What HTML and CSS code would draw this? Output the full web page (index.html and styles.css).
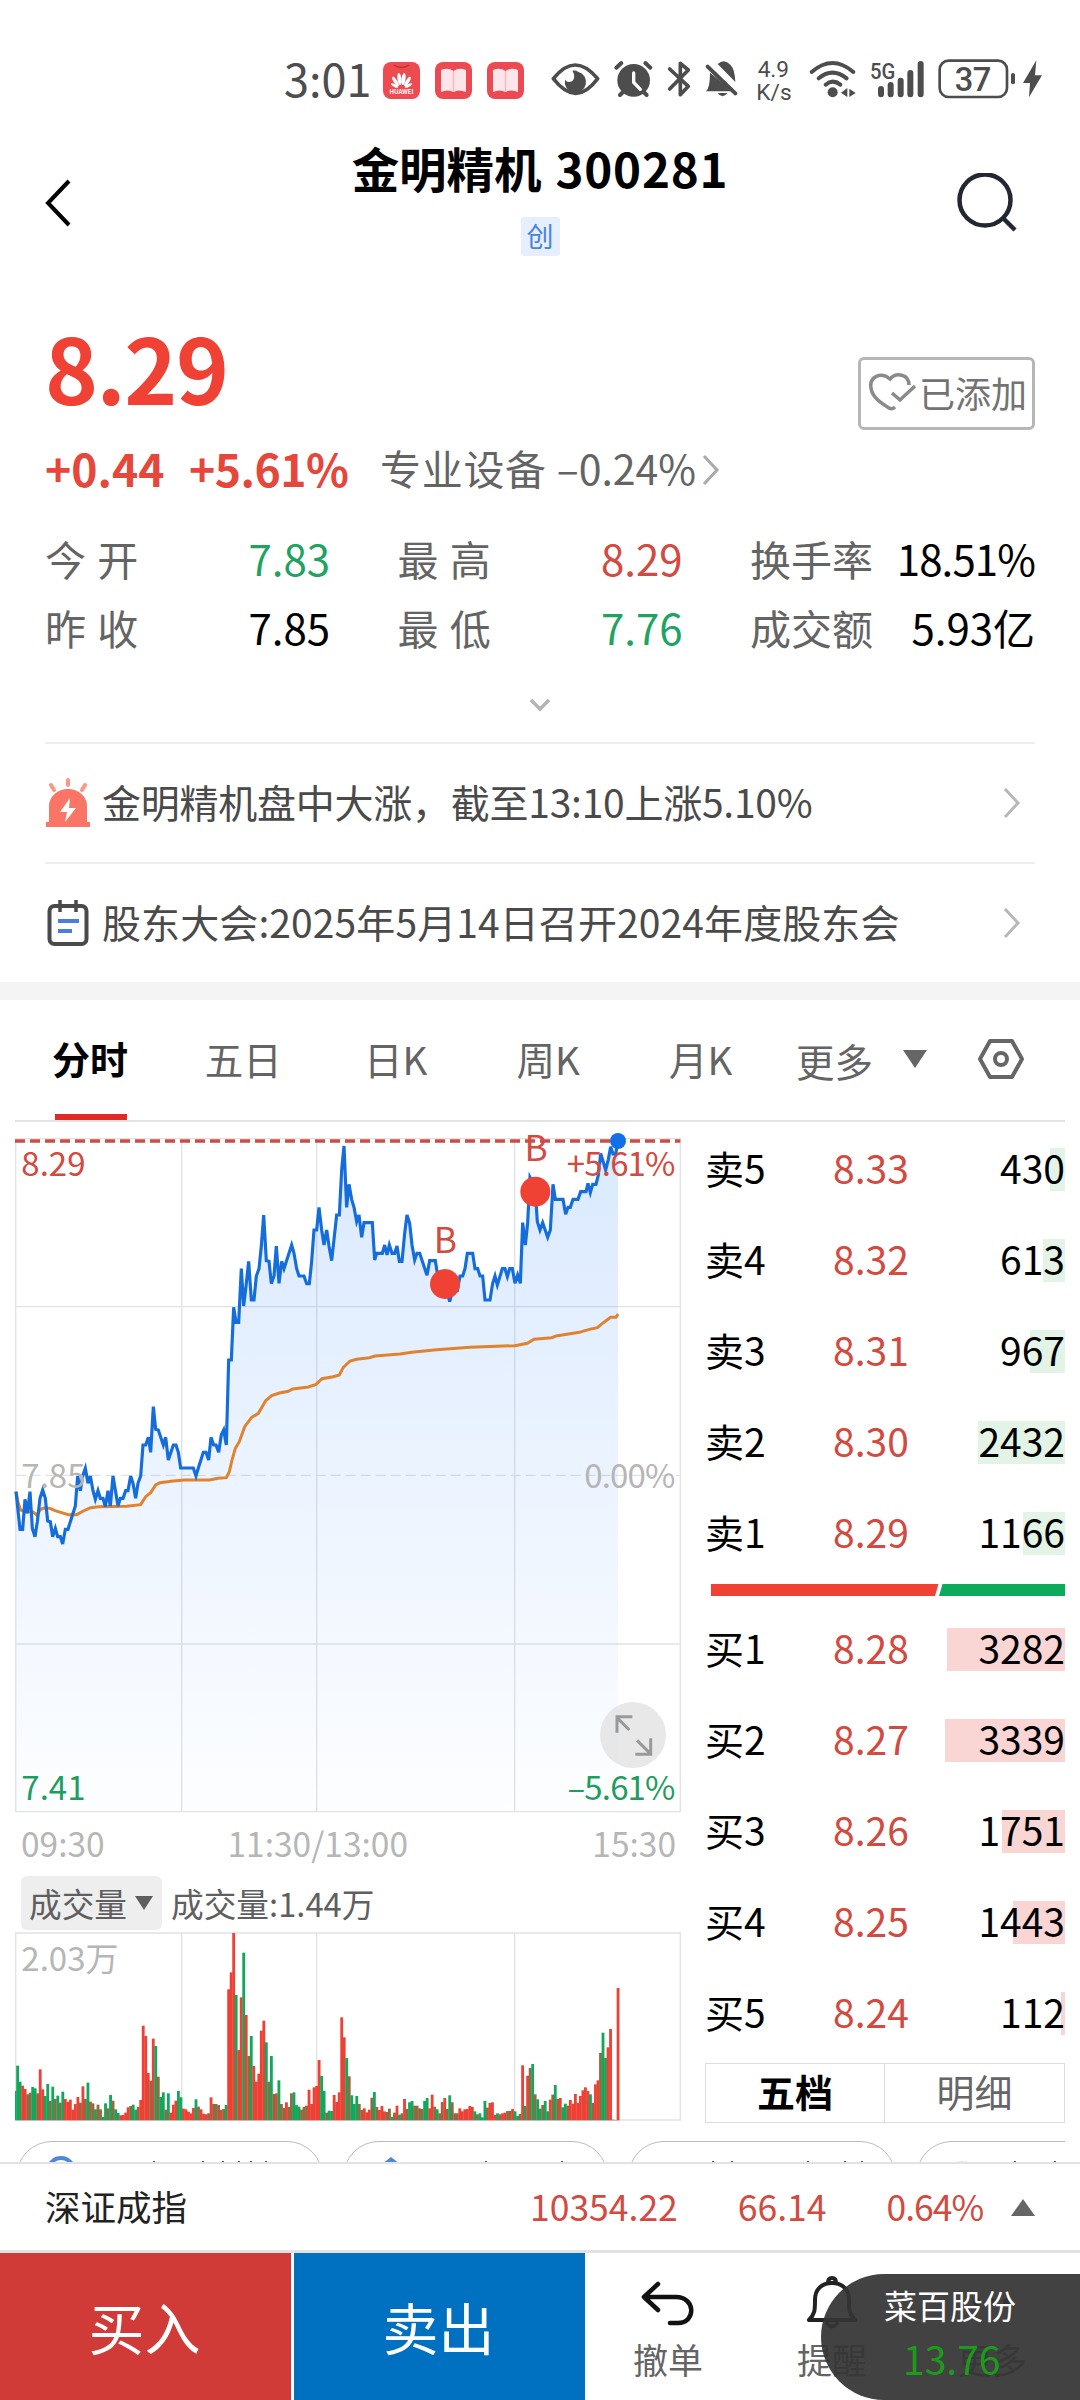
FILE: index.html
```
<!DOCTYPE html>
<html lang="zh-CN">
<head>
    <meta charset="UTF-8">
    <meta name="viewport" content="width=device-width, initial-scale=1.0">
    <title>金明精机 300281</title>
    <link rel="stylesheet" href="styles.css">
</head>
<body>
    <!-- Status Bar -->
    <div class="status-bar">
        <span class="time">3:01</span>
        <div class="app-badges">
            <svg width="37" height="37" viewBox="0 0 37 37">
                <rect width="37" height="37" rx="8" fill="#ee4b50"/>
                <path d="M11 3q7.500 5 15 0" fill="none" stroke="#b93338" stroke-width="1.500"/>
                <g fill="#fff">
                    <ellipse cx="16.500" cy="17" rx="2" ry="6" transform="rotate(-8 16.500 17)"/>
                    <ellipse cx="20.500" cy="17" rx="2" ry="6" transform="rotate(8 20.500 17)"/>
                    <ellipse cx="12.500" cy="19.500" rx="1.800" ry="5.500" transform="rotate(-32 12.500 19.500)"/>
                    <ellipse cx="24.500" cy="19.500" rx="1.800" ry="5.500" transform="rotate(32 24.500 19.500)"/>
                    <ellipse cx="11.500" cy="23.500" rx="1.300" ry="4" transform="rotate(-62 11.500 23.500)"/>
                    <ellipse cx="25.500" cy="23.500" rx="1.300" ry="4" transform="rotate(62 25.500 23.500)"/>
                </g>
                <text x="18.500" y="32" class="brand" text-anchor="middle">HUAWEI</text>
            </svg>
            <svg width="37" height="37" viewBox="0 0 37 37">
                <rect width="37" height="37" rx="8" fill="#ec4a52"/>
                <path d="M6 8q7-3 12.500 1q5.500-4 12.500-1v22q-7-3-12.500 0q-5.500-3-12.500 0z" fill="#fde6ea"/>
                <path d="M18.500 9v21" stroke="#f5b9c3" stroke-width="1.500"/>
            </svg>
            <svg width="37" height="37" viewBox="0 0 37 37">
                <rect width="37" height="37" rx="8" fill="#ec4a52"/>
                <path d="M6 8q7-3 12.500 1q5.500-4 12.500-1v22q-7-3-12.500 0q-5.500-3-12.500 0z" fill="#fde6ea"/>
                <path d="M18.500 9v21" stroke="#f5b9c3" stroke-width="1.500"/>
            </svg>
        </div>
        <svg class="status-icons" width="520" height="70" viewBox="0 0 1560 210">
            <g fill="none" stroke="#4d4d4d" stroke-linecap="round" stroke-linejoin="round">
                <path d="M40 101q65-82 133 0q-65 88-133 0z" stroke-width="11"/>
                <path d="M229 68l15-14M331 68l-15-14M240 150l12-12M320 150l-12-12" stroke-width="12"/>
                <path d="M389 72l56 52-24 25V55l24 20-56 57" stroke-width="11"/>
                <path d="M503 65l83 80" stroke-width="12"/>
                <path d="M815 81q62-54 125 0M836 100q41-34 84 0M857 119q21-18 44 0" stroke-width="12"/>
                <path d="M1023 132v16M1052 120v28M1082 107v41M1111 84v64M1142 57v91" stroke-width="18"/>
                <rect x="1199" y="47" width="202" height="109" rx="27" stroke-width="8"/>
                <path d="M1419 90v22" stroke-width="12"/>
            </g>
            <g fill="#4d4d4d">
                <path d="M97 77q10-2 17 3a32 32 0 1 1-39 24q5 8 14 7c16-3 17-20 8-34z"/>
                <circle cx="281" cy="106" r="49"/>
                <path d="M510 83l68 56h-80q12-11 12-56zM533 57q20-18 38 2q14 14 15 52zM533 144h29q-14 20-29 0z"/>
                <circle cx="878" cy="142" r="15"/>
                <path d="M903 143l19-14v27zM928 131l19 13-19 12z"/>
                <path d="M1489 46l-40 68h21l-3 43 39-66h-21z"/>
            </g>
            <path d="M281 84v28l20 21" fill="none" stroke="#fff" stroke-width="10" stroke-linecap="round"/>
            <text x="700" y="97" font-size="68" textLength="94" text-anchor="middle">4.9</text>
            <text x="702" y="164" font-size="68" textLength="106" text-anchor="middle">K/s</text>
            <text x="990" y="101" font-size="68" textLength="76" lengthAdjust="spacingAndGlyphs" class="medium">5G</text>
            <text x="1299" y="138" font-size="98" textLength="110" text-anchor="middle" class="medium">37</text>
        </svg>
    </div>

    <!-- Title -->
    <div class="header">
        <svg width="26" height="48" viewBox="0 0 26 48"><path d="M24 2L3 24l21 22" fill="none" stroke="#000" stroke-width="4"/></svg>
        <div class="title-box">
            <h1>金明精机 <span>300281</span></h1>
            <span class="board">创</span>
        </div>
        <svg width="60" height="60" viewBox="0 0 60 60" fill="none" stroke="#222731" stroke-width="4.500"><circle cx="28" cy="27" r="25.500"/><path d="M46 45l12 12"/></svg>
    </div>

    <!-- Quote -->
    <div class="quote">
        <div class="price-row">
            <span class="price">8.29</span>
            <div class="added">
                <svg width="50" height="40" viewBox="0 0 50 40" fill="none" stroke="#8a8a8a" stroke-width="3.500"><path d="M41 13C41 2 28 0 22 7C13-1 1 5 3 16c1 9 10 15 18 20q3 2 6-1"/><path d="M24 21l8 7 15-14"/></svg>
                已添加
            </div>
        </div>
        <div class="change-row">
            <b>+0.44</b>
            <b class="pct">+5.61%</b>
            <span class="sector">专业设备 <i>–0.24%</i></span>
            <svg width="18" height="30" viewBox="0 0 18 30"><path d="M2 1l13 14L2 29" fill="none" stroke="#aaa" stroke-width="3"/></svg>
        </div>
        <div class="stats">
            <div class="stat"><label>今 开</label><span class="green">7.83</span></div>
            <div class="stat"><label>最 高</label><span class="red">8.29</span></div>
            <div class="stat"><label>换手率</label><span class="tight">18.51%</span></div>
            <div class="stat"><label>昨 收</label><span>7.85</span></div>
            <div class="stat"><label>最 低</label><span class="green">7.76</span></div>
            <div class="stat"><label>成交额</label><span>5.93亿</span></div>
        </div>
        <div class="expand">
            <svg width="22" height="14" viewBox="0 0 22 14"><path d="M2 2l9 9 9-9" fill="none" stroke="#b4b4b4" stroke-width="3.500"/></svg>
        </div>
        <div class="notice">
            <svg width="46" height="50" viewBox="0 0 46 50">
                <path d="M23 2v5M6 7l3 5M40 7l-3 5" stroke="#ff9584" stroke-width="4" stroke-linecap="round"/>
                <path d="M4 44V28a19 17 0 0 1 38 0v16h3v5H1v-5z" fill="#fb7566"/>
                <path d="M25 20L15 34h7l-2 10 11-14h-7z" fill="#fff"/>
            </svg>
            <span class="news">金明精机盘中大涨，截至13:10上涨5.10%</span>
            <svg width="18" height="32" viewBox="0 0 18 32"><path d="M2 2l13 14L2 30" fill="none" stroke="#b8b8b8" stroke-width="3"/></svg>
        </div>
        <div class="notice">
            <svg width="46" height="50" viewBox="0 0 46 50" fill="none">
                <rect x="4.500" y="8" width="37" height="38" rx="5" stroke="#4a4a4a" stroke-width="4"/>
                <path d="M15 2v12M31 2v12" stroke="#4a4a4a" stroke-width="3.500"/>
                <path d="M13 23h21M13 33h14" stroke="#4b7de0" stroke-width="4"/>
            </svg>
            <span>股东大会:2025年5月14日召开2024年度股东会</span>
            <svg width="18" height="32" viewBox="0 0 18 32"><path d="M2 2l13 14L2 30" fill="none" stroke="#b8b8b8" stroke-width="3"/></svg>
        </div>
    </div>
    <div class="band"></div>

    <!-- Period Tabs -->
    <div class="tabs">
        <span class="tab active">分时</span>
        <span class="tab">五日</span>
        <span class="tab">日K</span>
        <span class="tab">周K</span>
        <span class="tab">月K</span>
        <span class="tab more">更多<svg width="24" height="18" viewBox="0 0 24 18"><path d="M0 0h24L12 18z" fill="#666"/></svg></span>
        <svg class="gear" width="46" height="42" viewBox="0 0 46 42" fill="none" stroke="#666"><path d="M12 3h22l10 18-10 18H12L2 21z" stroke-width="4" stroke-linejoin="round"/><circle cx="23" cy="21" r="6" stroke-width="4"/></svg>
    </div>

    <div class="main">
        <div class="charts">
            <!-- Price Chart -->
            <svg class="price-chart" width="667" height="675" viewBox="45 54 2001 2025">
                <defs>
                    <linearGradient id="area" x1="0" y1="0" x2="0" y2="1">
                        <stop offset="0" stop-color="#1a78ff" stop-opacity=".16"/>
                        <stop offset="1" stop-color="#1a78ff" stop-opacity=".01"/>
                    </linearGradient>
                </defs>
                <path class="grid" d="M47 56H2041V2075H47zM47 560H2041M47 1572H2041M545 56V2075M950 56V2075M1544 56V2075"/>
                <path d="M47 1066H2041" class="grid" stroke-dasharray="30 15"/>
                <path id="fill" fill="url(#area)"/>
                <polyline class="avg" points="48,1115 55,1150 62,1170 75,1175 98,1175 110,1185 122,1168 135,1163 150,1165 165,1172 205,1184 230,1184 250,1173 272,1163 295,1160 380,1159 422,1154 437,1130 452,1118 467,1095 480,1088 520,1083 555,1080 628,1080 655,1075 679,1073 688,1055 696,1020 706,985 718,965 734,920 755,892 775,880 797,842 815,827 838,819 865,814 878,807 925,801 948,793 966,776 1000,770 1018,765 1030,742 1050,723 1070,718 1108,713 1125,708 1200,702 1235,697 1310,689 1410,682 1545,677 1582,670 1602,658 1655,653 1668,648 1738,637 1768,628 1792,623 1810,608 1832,592 1848,592 1854,582"/>
                <polyline id="line" class="line" points="48,1115 60,1228 68,1228 75,1138 82,1180 90,1115 97,1225 105,1250 112,1205 120,1135 128,1110 136,1135 143,1203 151,1205 158,1250 166,1225 173,1250 181,1250 188,1272 196,1228 204,1228 211,1205 226,1158 233,1068 241,1112 248,1068 256,1045 264,1090 271,1068 279,1112 286,1138 294,1112 301,1135 309,1135 316,1160 324,1112 331,1158 339,1068 354,1158 361,1135 369,1135 377,1112 384,1112 392,1068 399,1090 407,1135 414,1090 422,1068 429,975 437,975 445,952 452,997 460,860 467,928 475,930 490,975 497,952 505,1020 520,975 528,975 535,997 542,1044 580,1044 588,1068 595,1044 610,997 618,997 626,1020 633,952 641,975 648,975 656,997 664,944 671,930 679,975 686,720 694,720 701,562 708,607 716,607 724,446 731,558 739,490 746,424 754,540 762,540 769,468 777,446 784,378 791,285 799,422 807,424 814,491 822,468 829,378 837,490 845,424 852,446 875,375 882,400 890,446 897,468 912,468 920,491 928,491 935,424 942,330 950,330 957,262 965,330 972,375 980,330 987,378 995,422 1010,285 1018,285 1025,150 1032,78 1040,262 1047,193 1055,238 1062,262 1070,305 1077,285 1085,352 1092,308 1117,308 1124,420 1130,400 1147,400 1154,375 1161,405 1168,375 1176,400 1184,400 1191,378 1198,424 1206,424 1214,340 1221,285 1229,310 1236,375 1244,420 1251,400 1259,400 1281,466 1289,422 1306,422 1312,460 1320,490 1342,515 1349,545 1357,515 1372,512 1380,468 1388,468 1395,446 1402,400 1418,400 1425,446 1433,446 1440,468 1448,468 1455,540 1470,540 1478,490 1485,468 1492,495 1507,446 1515,446 1522,470 1529,446 1537,446 1545,490 1553,465 1561,490 1568,308 1576,375 1583,308 1590,172 1605,200 1612,305 1620,330 1628,308 1643,352 1651,330 1659,193 1666,238 1689,238 1697,283 1704,262 1711,262 1719,238 1734,238 1742,215 1758,215 1764,190 1771,218 1778,193 1788,193 1795,165 1802,100 1817,150 1825,118 1832,80 1839,102 1847,102 1854,62"/>
                <path d="M45 63H2041" stroke="#cd4b41" stroke-width="10" stroke-dasharray="30 15"/>
                <text x="64" y="1104" class="axis">7.85</text>
                <text x="2024" y="1104" class="axis end">0.00%</text>
                <text x="64" y="168" class="axis up">8.29</text>
                <text x="2024" y="168" class="axis up end">+5.61%</text>
                <text x="64" y="2041" class="axis down">7.41</text>
                <text x="2024" y="2041" class="axis down end">–5.61%</text>
                <circle cx="1854" cy="63" r="24" fill="#1070e8"/>
                <circle cx="1335" cy="492" r="45" fill="#ef4234"/>
                <circle cx="1606" cy="215" r="45" fill="#ef4234"/>
                <text x="1336" y="399" class="mark">B</text>
                <text x="1608" y="123" class="mark">B</text>
                <circle cx="1899" cy="1845" r="99" fill="#dedede" fill-opacity=".7"/>
                <path d="M1888 1830l-37-37M1851 1838v-48h46M1911 1861l37 37M1906 1903h46v-48" fill="none" stroke="#999" stroke-width="9"/>
            </svg>
            <div class="time-axis"><span>09:30</span><span class="noon">11:30/13:00</span><span>15:30</span></div>
            <div class="indicator">
                <span class="select">成交量<svg width="18" height="14" viewBox="0 0 18 14"><path d="M0 0h18L9 14z" fill="#5f5f5f"/></svg></span>
                成交量:1.44万
            </div>
            <!-- Volume Chart -->
            <svg class="volume-chart" width="667" height="190" viewBox="45 96 2001 570">
                <path class="grid" d="M47 99H2041V660H47zM545 99V660M950 99V660M1544 99V660"/>
                <text x="64" y="213" class="axis">2.03万</text>
                <g id="bars"></g>
            </svg>
        </div>

        <!-- Order Book -->
        <div class="book">
            <div id="asks"></div>
            <svg class="ratio" width="354" height="12" viewBox="0 0 354 12"><path d="M0 0h227.500l-3.500 12H0z" fill="#ef4234"/><path d="M231.500 0H354v12H228z" fill="#0cab5c"/></svg>
            <div id="bids"></div>
            <div class="book-tabs"><span class="on">五档</span><span>明细</span></div>
        </div>
    </div>

    <!-- Shortcut chips, cut off by the index bar -->
    <div class="chips">
        <div class="chip c1"><svg width="250" height="24" viewBox="0 0 250 24"><circle cx="44" cy="29" r="13" fill="none" stroke="#4f86d6" stroke-width="4"/><path d="M137 19v4M175 20v3M186 19v4M206 19v4M222 19v4M234 19v4M249 19v4" stroke="#555" stroke-width="2"/></svg></div>
        <div class="chip c2"><svg width="230" height="24" viewBox="0 0 230 24"><path d="M33 26l14-11 14 11" fill="#4f86d6"/><path d="M142 19v4M176 20v3M218 19v4" stroke="#555" stroke-width="2"/></svg></div>
        <div class="chip c3"><svg width="240" height="24" viewBox="0 0 240 24"><path d="M84 19v4M103 19v4M145 20v3M179 19v4M216 19v4M233 19v4" stroke="#555" stroke-width="2"/></svg></div>
        <div class="chip c4"><svg width="150" height="24" viewBox="0 0 150 24"><path d="M40 21h10" stroke="#ddd" stroke-width="3"/><path d="M98 19v4M138 19v4" stroke="#555" stroke-width="2"/></svg></div>
    </div>

    <div class="index-bar">
        <span class="name">深证成指</span>
        <span class="red">10354.22</span>
        <span class="red diff">66.14</span>
        <span class="red rate">0.64%</span>
        <svg width="24" height="17" viewBox="0 0 24 17"><path d="M12 0l12 17H0z" fill="#666"/></svg>
    </div>

    <!-- Bottom Actions -->
    <div class="footer">
        <div class="trade buy">买入</div>
        <div class="trade sell">卖出</div>
        <div class="action">
            <svg width="54" height="56" viewBox="0 0 54 56" fill="none" stroke="#111" stroke-width="4.500" stroke-linecap="round" stroke-linejoin="round"><path d="M17 9L3 22l14 13M4 22h31c20 0 20 26 2 26h-8"/></svg>
            撤单
        </div>
        <div class="action alert">
            <svg width="54" height="56" viewBox="0 0 54 56" fill="none" stroke="#222" stroke-width="4" stroke-linejoin="round"><path d="M4 45h46c-6-6-6-10-6-20C44 14 37 8 27 8S10 14 10 25c0 10 0 14-6 20zM23 8q0-5 4-5t4 5M21 47q6 9 12 0"/></svg>
            提醒
        </div>
        <div class="action">
            <svg width="54" height="56" viewBox="0 0 54 56" fill="#222"><circle cx="12" cy="27" r="4"/><circle cx="27" cy="27" r="4"/><circle cx="42" cy="27" r="4"/></svg>
            更多
        </div>
        <div class="floating">
            <span>菜百股份</span>
            <span class="value">13.76</span>
        </div>
    </div>

    <script>
        // Close the price line down to the bottom of the chart
        const points = document.getElementById("line").getAttribute("points");
        document.getElementById("fill").setAttribute("d", "M48 2075L" + points + " 1854,2075z");

        // One entry per minute: top of the bar and its colour (r up, g down, m mixed)
        const volumes = "573g 497g 545g 557r 567r 583m 578m 561g 565g 580m 508r 568r 588g 552g 603m 560g 597m 587g 608m 575g 597r 606r 599r 629r 612r 591r 608m 559r 597m 548g 605m 610m 628g 614m 628m 651g 610g 625m 585g 602m 628g 639g 646r 645r 638r 622r 618m 614g 629g 621m 600r " +
            "377r 408r 519r 542m 416r 438g 530m 591g 577g 629m 580g 638r 614r 602r 573g 592g 626r 628r 635r 640r 624r 598g 620m 628r 641r 643r 640m 592r 612m 612m 615m 630r 627m 615g 268r 217r 99r 285g 450r 292r 158g 345r 468m 408g 498r 545r 521r 392r 362r 427g 545m 468g 582m 580r 541g 612m 624m 607r 621m 580m 577g 615g 620g 629m 621m 617m 569r 612r 562r 558r 480r 528g 573g 638m 632g 633g 585r 606r 577r 352r 412r 474g 529m " +
            "586g 612g 588g 612m 630m 625r 637r 629r 593m 576g 621m 630r 618r 634r 636m 626m 651g 638m 617r 644g 640m 597r 627m 607g 603g 617m 617m 625m 627m 603g 594g 625r 584r 620m 628g 640m 606m 594r 627m 586g 607m 640m 640m 625r 634r 628r 627r 618r 621r 634g 643m 640g 652g 603g 623m 609r 607r 645r 640g 643m 640r 638r 633m 633m 627r 634g 648g 642m 496r 618g 527r 504m 492g 583m 598g 626g 615m 603g 634g 599r 584m 555g 597m 594r 622g 611g 617m 600r 611r 582r 609r 588r 571r 562r 573r 583g 609m 553r 541r 459m 398g 474g 442r 387r 659g 660r 264r";
        const colors = { r: "#ed4135", g: "#12a85b", m: "#94693f" };
        let bars = "";
        volumes.split(" ").forEach(function(item, i) {
            const top = parseInt(item);
            const x = 41 + i * 7.5375;
            const left = Math.max(x, 45);
            bars += `<rect x="${left}" y="${top}" width="${x + 8.5 - left}" height="${661 - top}" fill="${colors[item.slice(-1)]}"/>`;
        });
        document.getElementById("bars").innerHTML = bars;

        // Order book rows, bar width is relative to the largest order
        function renderRows(id, rows) {
            document.getElementById(id).innerHTML = rows.map(function(row) {
                const width = Math.round(row[2] * 120 / 3339);
                return `<div class="order ${id}"><span>${row[0]}</span><span class="red">${row[1]}</span>
                    <span class="amount"><i style="width:${width}px"></i>${row[2]}</span></div>`;
            }).join("");
        }
        renderRows("asks", [["卖5", "8.33", 430], ["卖4", "8.32", 613], ["卖3", "8.31", 967], ["卖2", "8.30", 2432], ["卖1", "8.29", 1166]]);
        renderRows("bids", [["买1", "8.28", 3282], ["买2", "8.27", 3339], ["买3", "8.26", 1751], ["买4", "8.25", 1443], ["买5", "8.24", 112]]);
    </script>
</body>
</html>
```
FILE: styles.css
```
/* General Reset and Basic Styles */
* {
    margin: 0;
    padding: 0;
    box-sizing: border-box;
}

body {
    width: 1080px;
    height: 2400px;
    overflow: hidden;
    background-color: #fff;
    color: #000;
    font-family: "Noto Sans CJK SC", sans-serif;
}

svg {
    display: block;
    flex-shrink: 0;
}

i {
    font-style: normal;
}

.red {
    color: #d24a40;
}

.green {
    color: #1ea362;
}

/* Status Bar */
.status-bar {
    display: flex;
    align-items: center;
    height: 120px;
    padding: 40px 0 0 284px;
    color: #4d4d4d;
}

.time {
    width: 99px;
    margin-top: -4px;
    font-size: 45px;
    line-height: 60px;
}

.app-badges {
    display: flex;
    gap: 15px;
    width: 157px;
}

.brand {
    font-size: 6px;
    font-weight: bold;
    fill: #fff;
}

.status-icons text {
    font-family: Roboto, sans-serif;
    fill: #4d4d4d;
}

.status-icons .medium {
    font-weight: 500;
}

/* Title */
.header {
    display: flex;
    align-items: center;
    justify-content: space-between;
    height: 166px;
    padding: 0 63px 0 45px;
}

.title-box {
    display: flex;
    flex-direction: column;
    align-items: center;
    align-self: flex-start;
    padding: 18px 0 0 52px;
}

.title-box h1 {
    font-size: 47.5px;
    line-height: 60px;
}

.title-box h1 span {
    letter-spacing: 0.8px;
    margin-left: 3px;
}

.board {
    width: 39px;
    height: 39px;
    margin-top: 19px;
    border-radius: 3px;
    background-color: #e6effd;
    color: #4a83dc;
    font-size: 27px;
    line-height: 37px;
    text-align: center;
}

/* Quote */
.quote {
    padding: 28px 45px 0;
}

.price-row {
    display: flex;
    justify-content: space-between;
    height: 115px;
}

.price {
    margin-top: 2px;
    color: #ef4234;
    font-size: 90px;
    font-weight: bold;
    letter-spacing: -1.5px;
    line-height: 100px;
}

.added {
    display: flex;
    align-items: center;
    gap: 1px;
    width: 177px;
    height: 73px;
    margin-top: 43px;
    padding: 0 0 3px 7px;
    border: 3px solid #b6b6b6;
    border-radius: 6px;
    color: #737373;
    font-size: 36px;
    white-space: nowrap;
}

.change-row {
    display: flex;
    align-items: center;
    height: 60px;
    margin-top: 8px;
    color: #646464;
    font-size: 41px;
}

.change-row b {
    width: 144px;
    color: #e5473b;
    font-size: 44.5px;
}

.change-row b.pct {
    width: 191px;
    letter-spacing: -0.5px;
}

.sector {
    width: 322px;
    letter-spacing: 0.7px;
    white-space: nowrap;
}

.sector i {
    letter-spacing: 0;
}

.change-row svg {
    margin-top: 6px;
}

.stats {
    display: grid;
    grid-template-columns: 285px 285px 285px;
    column-gap: 67.5px;
    margin-top: 26px;
}

.stat {
    display: flex;
    justify-content: space-between;
    align-items: center;
    height: 69px;
    font-size: 42px;
    white-space: nowrap;
}

.stat label {
    color: #646464;
    font-size: 41px;
    word-spacing: 2px;
}

.stat .tight {
    letter-spacing: -0.9px;
}

.expand {
    display: flex;
    justify-content: center;
    height: 81px;
    padding-top: 37px;
}

.notice {
    display: flex;
    align-items: center;
    height: 120px;
    border-top: 2px solid #efefef;
    color: #4a4a4a;
    font-size: 39px;
}

.notice span {
    flex: 1;
    margin: -4px 0 0 11px;
    letter-spacing: 0.1px;
}

.notice .news {
    letter-spacing: -0.25px;
}

.notice svg:last-child {
    margin-right: 14px;
}

.band {
    height: 18px;
    background-color: #f4f4f4;
}

/* Period Tabs */
.tabs {
    display: flex;
    height: 122px;
    margin: 0 15px;
    border-bottom: 2px solid #e3e3e3;
    color: #646464;
    font-size: 38.5px;
    line-height: 116px;
}

.tab {
    width: 152.5px;
    text-align: center;
}

.tab.active {
    width: 72px;
    margin: 0 40px 0 40px;
    border-bottom: 6px solid #e02a26;
    color: #000;
    font-size: 38px;
    font-weight: bold;
    text-indent: -3px;
    white-space: nowrap;
}

.tab.more {
    display: flex;
    align-items: center;
    gap: 30px;
    width: 182px;
    margin-left: 19px;
}

.tab.more svg {
    margin-bottom: 2px;
}

.gear {
    margin-top: 38px;
}

/* Charts */
.main {
    display: flex;
    height: 1019px;
    padding: 0 15px;
}

.charts {
    width: 667px;
    padding-top: 16px;
}

.price-chart {
    overflow: visible;
}

.grid {
    fill: none;
    stroke: #e2e2e4;
    stroke-width: 4;
}

.line {
    fill: none;
    stroke: #146ddb;
    stroke-width: 9.5;
}

.avg {
    fill: none;
    stroke: #e0832f;
    stroke-width: 9;
}

.axis {
    font-size: 99px;
    fill: #b6b6b6;
}

.axis.up {
    fill: #d24a40;
}

.axis.down {
    fill: #1f9d60;
}

.end {
    letter-spacing: -2.5px;
    text-anchor: end;
}

.mark {
    font-size: 106px;
    fill: #d24a40;
    text-anchor: middle;
}

.time-axis {
    display: grid;
    grid-template-columns: 1fr 200px 1fr;
    height: 63px;
    padding: 0 6px;
    color: #b6b6b6;
    font-size: 33.5px;
    line-height: 59px;
}

.time-axis span:last-child {
    text-align: right;
}

.time-axis .noon {
    margin-left: -21px;
    white-space: nowrap;
}

.indicator {
    display: flex;
    align-items: center;
    gap: 9px;
    height: 54px;
    margin: 0 0 2px 6px;
    color: #5f5f5f;
    font-size: 32.7px;
    line-height: 50px;
}

.select {
    display: flex;
    align-items: center;
    gap: 8px;
    width: 141px;
    height: 54px;
    padding-left: 8px;
    border-radius: 6px;
    background-color: #eee;
    white-space: nowrap;
}

/* Order Book */
.book {
    width: 360px;
    margin: 2px 0 0 23px;
}

.order {
    display: flex;
    align-items: center;
    height: 91px;
    font-size: 39px;
}

.order span {
    width: 128px;
    padding-bottom: 5px;
    line-height: 43px;
}

.order .amount {
    position: relative;
    width: 104px;
    padding-bottom: 0;
    line-height: 38px;
    height: 43px;
    text-align: right;
    z-index: 0;
}

.amount i {
    position: absolute;
    right: 0;
    top: 0;
    height: 43px;
    z-index: -1;
}

.asks i {
    background-color: #e3f3e5;
}

.bids i {
    background-color: #f9d5d4;
}

.ratio {
    margin: 5px 0 8px 6px;
}

.book-tabs {
    display: flex;
    height: 60px;
    margin-top: 4px;
    border: 1px solid #ddd;
    font-size: 38px;
    line-height: 54px;
}

.book-tabs span {
    width: 50%;
    color: #666;
    text-align: center;
}

.book-tabs .on {
    border-right: 1px solid #ddd;
    color: #000;
    font-weight: bold;
}

/* Chips */
.chips {
    display: flex;
    gap: 20px;
    height: 21px;
    margin: 0 15px 0 0;
    padding-left: 16px;
    overflow: hidden;
}

.chip {
    flex-shrink: 0;
    height: 72px;
    border: 1px solid #bbb;
    border-radius: 36px;
}

.c1 {
    width: 307px;
}

.c2 {
    width: 265px;
}

.c3 {
    width: 268px;
}

.c4 {
    width: 260px;
}

/* Index Bar */
.index-bar {
    display: flex;
    align-items: center;
    height: 91px;
    padding: 0 45px;
    border-top: 2px solid #e2e2e2;
    border-bottom: 3px solid #e2e2e2;
    font-size: 35.5px;
}

.index-bar span {
    margin-top: -4px;
}

.name {
    width: 485px;
    color: #222;
}

.index-bar .diff {
    margin-left: 60px;
}

.index-bar .rate {
    flex: 1;
    margin-left: 60px;
    letter-spacing: -1px;
}

/* Bottom Actions */
.footer {
    display: flex;
    position: relative;
    height: 147px;
}

.trade {
    width: 291px;
    margin-right: 3px;
    padding-right: 2px;
    color: #fff;
    font-size: 56px;
    line-height: 145px;
    text-align: center;
}

.buy {
    background-color: #d03b38;
}

.sell {
    background-color: #0070c0;
}

.action {
    display: flex;
    flex-direction: column;
    align-items: center;
    width: 160px;
    padding-top: 22px;
    color: #646464;
    font-size: 35px;
    line-height: 56px;
}

.alert {
    margin-left: 4px;
}

/* Floating ticker over the right corner */
.floating {
    position: absolute;
    right: 0;
    bottom: 0;
    width: 259px;
    height: 126px;
    padding: 4px 0 0 63px;
    border-radius: 63px 0 0 63px;
    background-color: rgba(53, 53, 53, 0.935);
    color: #fff;
    font-size: 33px;
    line-height: 54px;
}

.floating span {
    display: block;
}

.floating .value {
    padding-left: 19px;
    color: #1a9c1a;
    font-size: 39px;
    line-height: 52px;
}
```
